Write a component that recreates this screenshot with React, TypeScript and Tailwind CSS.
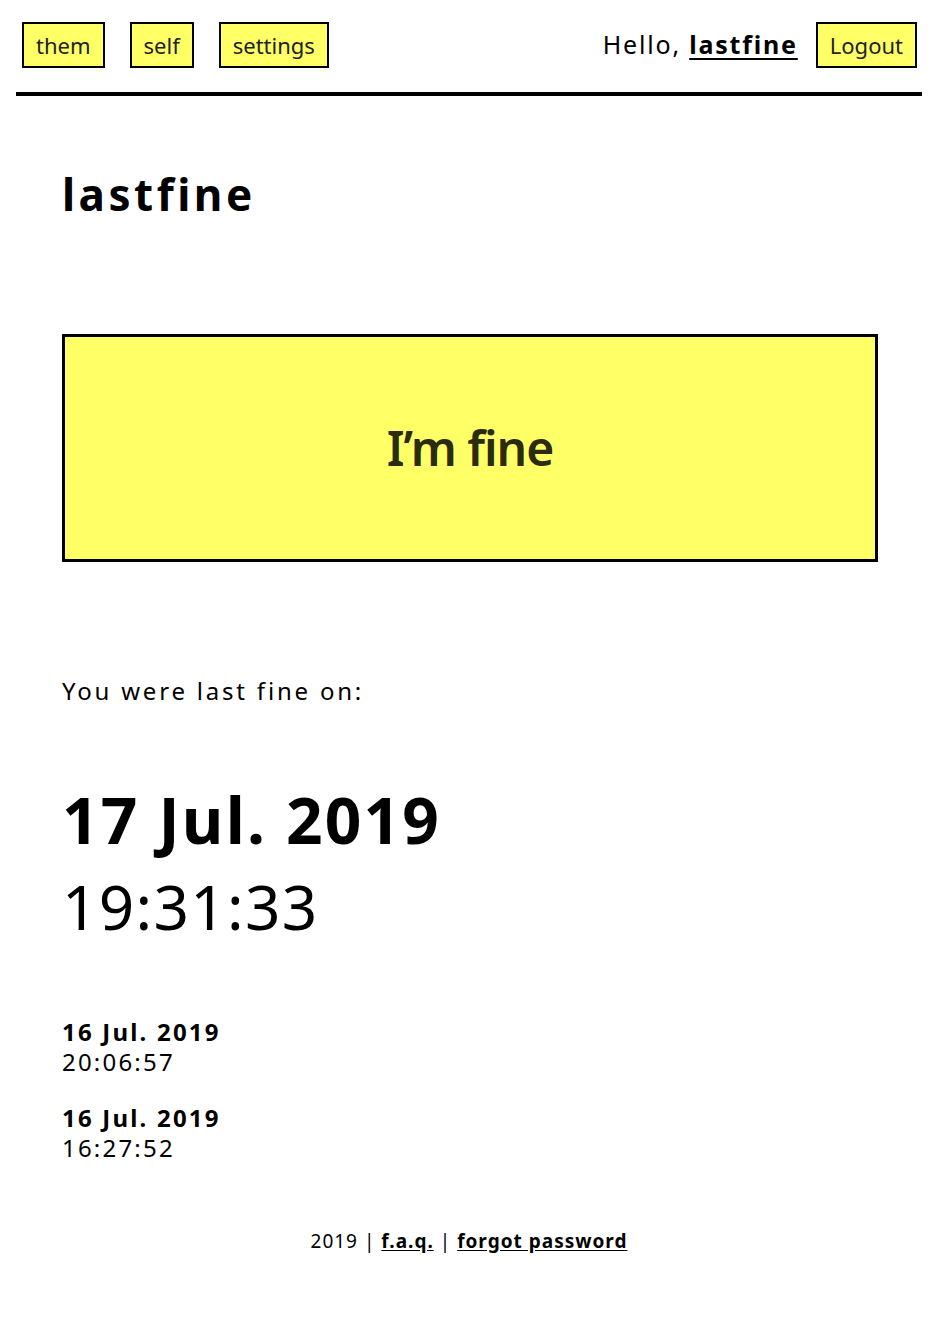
import React from "react";

const font = { fontFamily: '"Noto Sans", "Open Sans", sans-serif' };

function NavButton({ label }: { label: string }) {
  return (
    <a
      href="#"
      className="flex h-[46px] items-center border-2 border-black bg-[#ffff66] px-[12px] text-[22px] text-[#222]"
    >
      {label}
    </a>
  );
}

const history = [
  { date: "16 Jul. 2019", time: "20:06:57" },
  { date: "16 Jul. 2019", time: "16:27:52" },
];

export default function App() {
  return (
    <div className="min-h-[1320px] bg-white text-black" style={font}>
      <div className="px-[16px]">
        <div className="flex items-center justify-between pl-[6px] pr-[5px] pt-[22px] pb-[24px]">
          <div className="flex gap-[25px]">
            <NavButton label="them" />
            <NavButton label="self" />
            <NavButton label="settings" />
          </div>
          <div className="flex items-center gap-[18px]">
            <span className="text-[25px] tracking-[1.8px]">
              Hello,{" "}
              <a href="#" className="font-bold underline underline-offset-4">
                lastfine
              </a>
            </span>
            <NavButton label="Logout" />
          </div>
        </div>
        <div className="h-[4px] bg-black" />
      </div>

      <div className="px-[62px]">
        <h1 className="mt-[68px] text-[44px] font-bold tracking-[3.5px] leading-[60px]">
          lastfine
        </h1>

        <button className="mt-[110px] flex h-[228px] w-[816px] items-center justify-center border-[3px] border-black bg-[#ffff66] text-[48px] font-semibold tracking-[-1px] text-[#2b2b10]">
          I’m fine
        </button>

        <p className="mt-[111px] text-[24px] tracking-[2.8px]">You were last fine on:</p>

        <div className="mt-[64px]">
          <div className="text-[64px] font-bold leading-[94px] tracking-[2.2px]">
            17 Jul. 2019
          </div>
          <div className="text-[62px] leading-[78px] tracking-[1.3px]">19:31:33</div>
        </div>

        <div className="mt-[72px] flex flex-col gap-[26px]">
          {history.map((h, i) => (
            <div key={i} className="text-[24px] leading-[30px] tracking-[2.2px]">
              <div className="font-bold">{h.date}</div>
              <div>{h.time}</div>
            </div>
          ))}
        </div>
      </div>

      <footer className="mt-[64px] text-center text-[19px] tracking-[1px]">
        2019 |{" "}
        <a href="#" className="font-bold underline underline-offset-2">
          f.a.q.
        </a>{" "}
        |{" "}
        <a href="#" className="font-bold underline underline-offset-2">
          forgot password
        </a>
      </footer>
    </div>
  );
}
